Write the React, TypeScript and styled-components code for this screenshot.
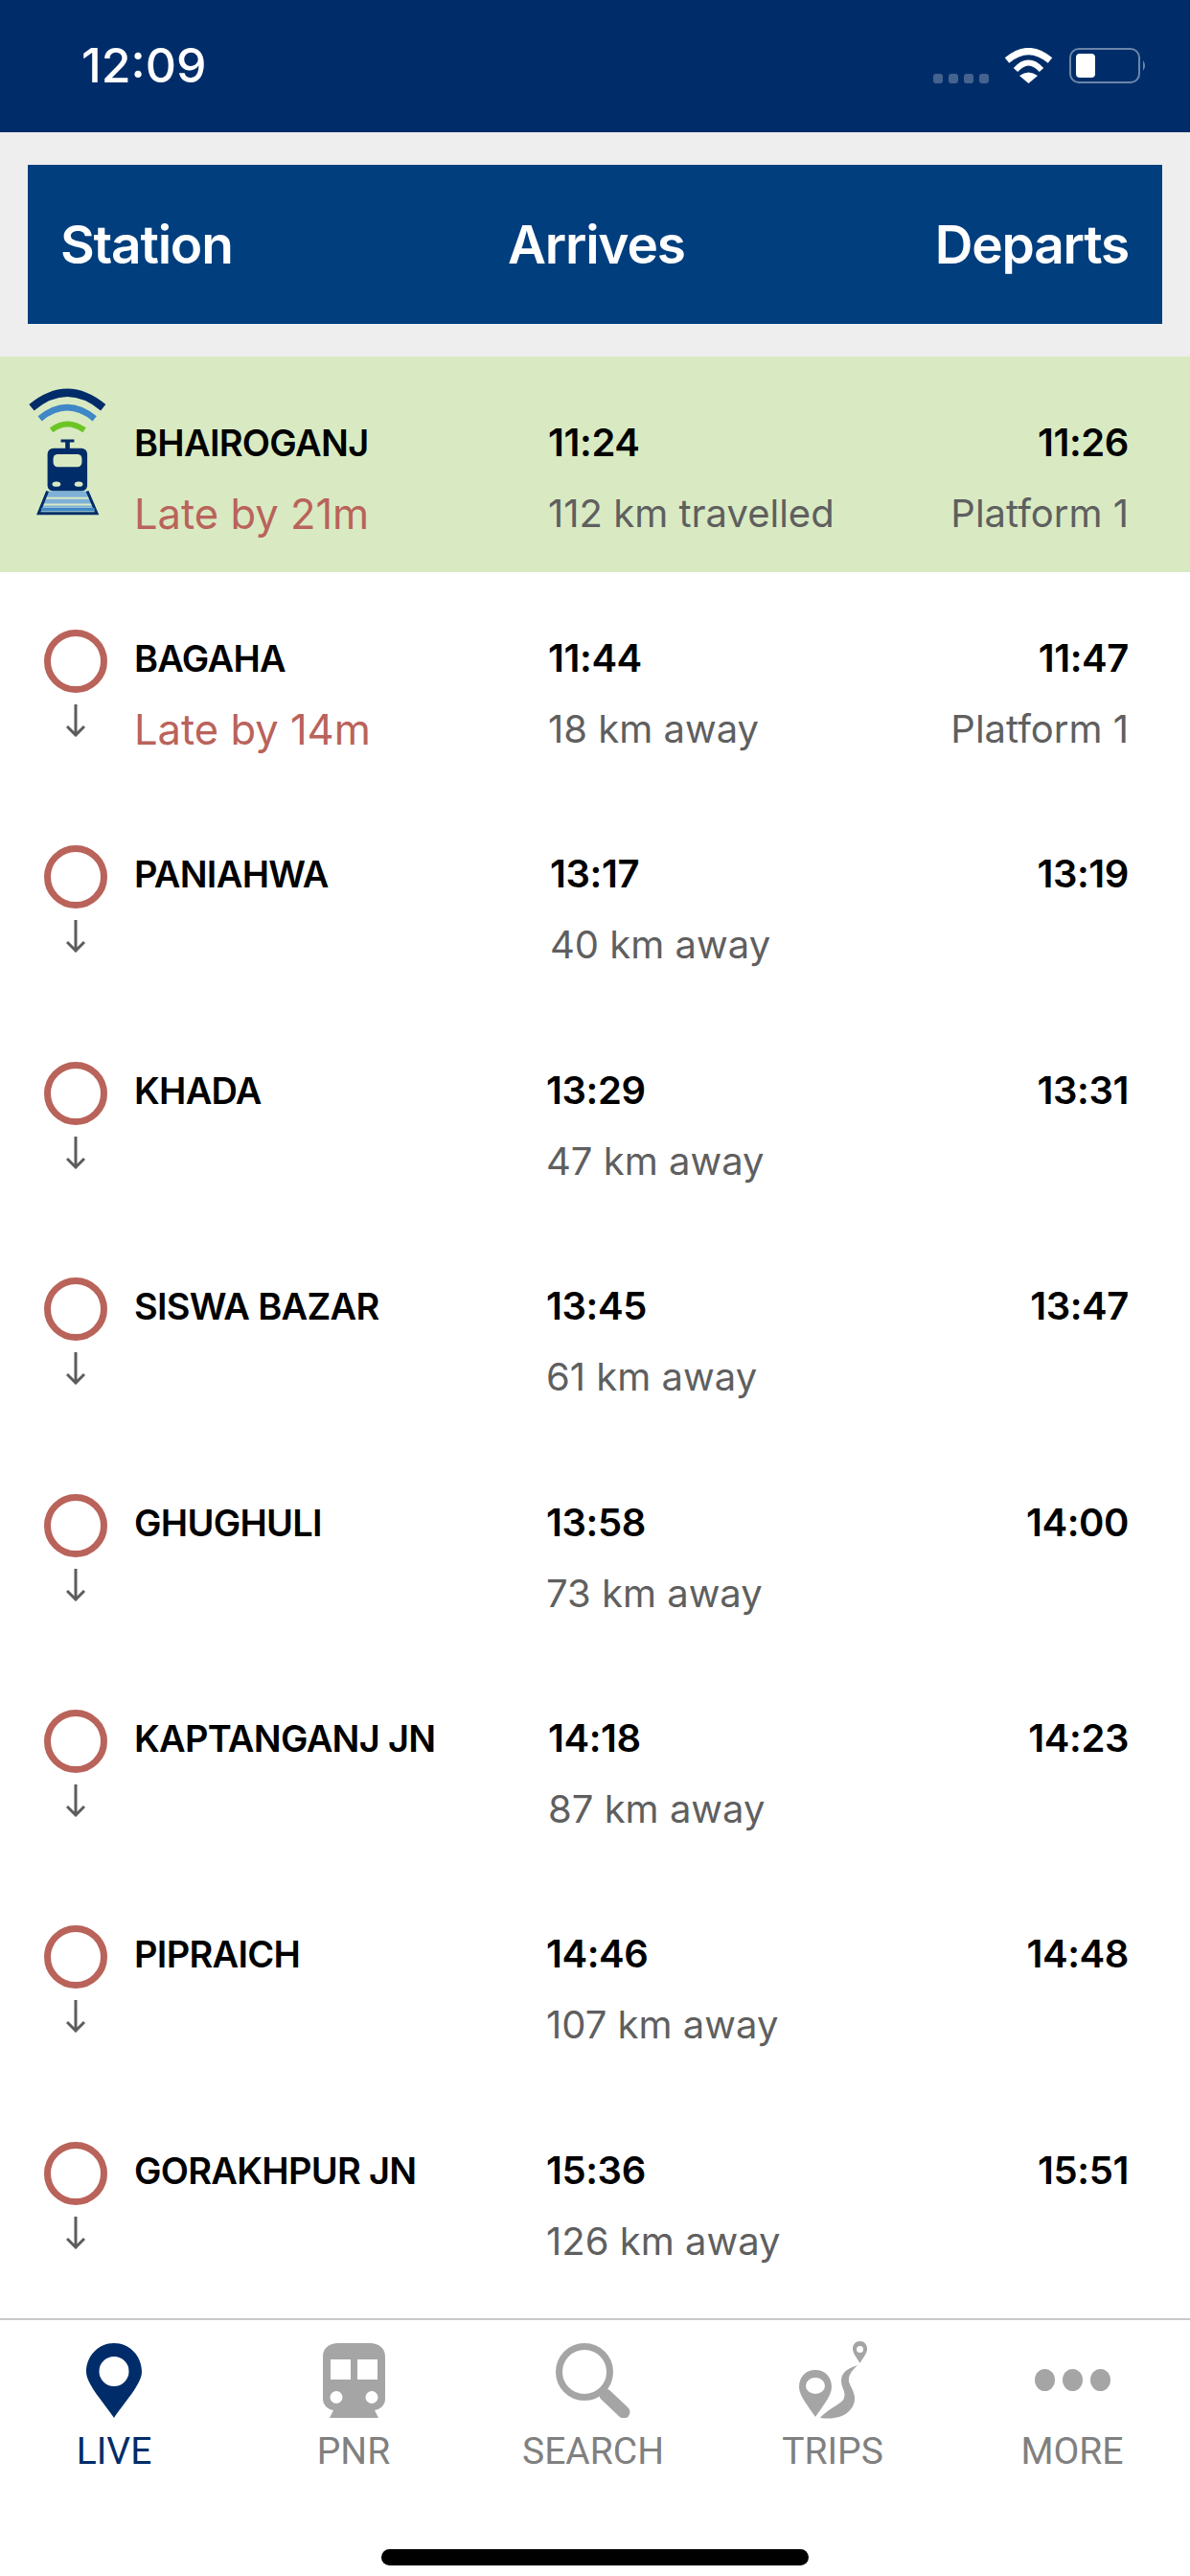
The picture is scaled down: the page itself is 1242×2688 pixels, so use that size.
import React from "react"
import styled, { createGlobalStyle } from "styled-components"

const GlobalStyle = createGlobalStyle`
  html, body {
    margin: 0;
    padding: 0;
    background: #fff;
    font-family: Inter, "Noto Sans", sans-serif;
  }
`

const Screen = styled.div`
  width: 1242px;
  height: 2688px;
  display: flex;
  flex-direction: column;
  overflow: hidden;
  background: #fff;
`

const StatusBar = styled.div`
  height: 138px;
  flex: none;
  box-sizing: border-box;
  background: #002d69;
  display: flex;
  align-items: flex-start;
  padding: 50px 45px 0 85px;
  color: #fff;
`

const Clock = styled.div`
  font-size: 50px;
  line-height: 37px;
  font-weight: 500;
  letter-spacing: 0;
`

const StatusIcons = styled.div`
  margin-left: auto;
  display: flex;
  align-items: flex-start;
`

const SignalDots = styled.div`
  display: flex;
  gap: 6px;
  margin: 27px 16px 0 0;
`

const SignalDot = styled.span`
  width: 10px;
  height: 10px;
  border-radius: 3px;
  background: #44648f;
`

const BatteryIcon = styled.svg`
  margin-left: 17px;
`

const HeaderBand = styled.div`
  height: 234px;
  flex: none;
  box-sizing: border-box;
  background: #eeeeee;
  padding: 34px 29px;
`

const HeaderBar = styled.div`
  height: 166px;
  box-sizing: border-box;
  background: #003e7e;
  color: #fff;
  display: grid;
  grid-template-columns: 467px 1fr auto;
  align-items: center;
  padding: 0 35px 0 34px;
  font-size: 55px;
  font-weight: 600;
  letter-spacing: -1.2px;
`

const List = styled.div`
  flex: 1;
  min-height: 0;
`

const Row = styled.div<{ $current?: boolean }>`
  height: ${(p) => (p.$current ? "225px" : "225.4px")};
  display: grid;
  grid-template-columns: 140px 430px 1fr auto;
  padding-right: 64px;
  background: ${(p) => (p.$current ? "#d9eac3" : "#fff")};
`

const Marker = styled.div<{ $current?: boolean }>`
  display: flex;
  flex-direction: column;
  align-items: flex-start;
  padding: ${(p) => (p.$current ? "33px 0 0 29px" : "60px 0 0 46px")};
`

const Ring = styled.span`
  width: 66px;
  height: 66px;
  box-sizing: border-box;
  border: 7px solid #b9635a;
  border-radius: 50%;
`

const ArrowIcon = styled.svg`
  margin: 12px 0 0 23px;
`

const Cell = styled.div<{ $shift?: number; $end?: boolean }>`
  padding-top: 53px;
  padding-left: ${(p) => p.$shift ?? 0}px;
  text-align: ${(p) => (p.$end ? "right" : "left")};
  white-space: nowrap;
`

const StationName = styled.div`
  height: 74px;
  line-height: 74px;
  font-size: 38px;
  font-weight: 600;
  letter-spacing: -0.7px;
  color: #000;
`

const Time = styled(StationName)`
  font-size: 40px;
  letter-spacing: -0.4px;
`

const Sub = styled.div<{ $late?: boolean }>`
  height: 74px;
  line-height: 74px;
  font-size: ${(p) => (p.$late ? "43.5px" : "40px")};
  font-weight: 400;
  color: ${(p) => (p.$late ? "#b9635a" : "#5f5f5f")};
`

const TabBar = styled.div`
  height: 269px;
  flex: none;
  box-sizing: border-box;
  border-top: 2px solid #c8c8c8;
  display: flex;
  flex-direction: column;
  align-items: center;
  padding-top: 22px;
`

const Tabs = styled.div`
  display: grid;
  grid-template-columns: repeat(5, 250px);
  margin-right: 4px;
`

const Tab = styled.div<{ $active?: boolean }>`
  display: flex;
  flex-direction: column;
  align-items: center;
  color: ${(p) => (p.$active ? "#002d69" : "#808080")};
  font-family: Roboto, Inter, sans-serif;
  font-size: 39px;
  line-height: 38px;
  font-weight: 400;
`

const TabIcon = styled.div`
  height: 81px;
  display: flex;
  align-items: center;
  justify-content: center;
  margin-bottom: 15px;
`

const Dots = styled.div`
  display: flex;
  gap: 8px;
`

const Dot = styled.span`
  width: 21px;
  height: 23px;
  border-radius: 50%;
  background: #a5a5a5;
`

const HomeIndicator = styled.div`
  width: 446px;
  height: 17px;
  margin-top: 83px;
  border-radius: 9px;
  background: #000;
`

const WifiGlyph = () => (
  <svg width="51" height="37" viewBox="0 0 51 37">
    <g fill="none" stroke="#fff">
      <path d="M3 13 Q25.5 -6 48 13" strokeWidth="7" />
      <path d="M12 23 Q25.5 8 39 23" strokeWidth="6" />
    </g>
    <path d="M16 29 Q25.5 22 35 29 L25.5 37Z" fill="#fff" />
  </svg>
)

const BatteryGlyph = () => (
  <BatteryIcon width="81" height="37" viewBox="0 0 81 37">
    <rect x="1" y="1" width="72" height="35" rx="9" fill="none" stroke="#6b86aa" strokeWidth="2" />
    <rect x="7" y="6" width="20" height="25" rx="4" fill="#fff" />
    <path d="M77 13 Q81 18.5 77 24Z" fill="#6b86aa" />
  </BatteryIcon>
)

const LiveTrainGlyph = () => (
  <svg width="83" height="134" viewBox="88 105 250 402">
    <g fill="none">
      <path d="M100 165 Q212 72 325 165" stroke="#002d69" strokeWidth="25" />
      <path d="M126 200 Q212 130 298 200" stroke="#3f87c6" strokeWidth="20" />
      <path d="M162 236 Q212 198 266 236" stroke="#6cc524" strokeWidth="18" />
    </g>
    <path d="M192 265 H234 V274 H220 V295 H206 V274 H192Z" fill="#002d69" />
    <rect x="150" y="293" width="125" height="135" rx="18" fill="#002d69" />
    <rect x="168" y="312" width="90" height="40" rx="14" fill="#d9eac3" />
    <ellipse cx="178" cy="406" rx="13" ry="8" fill="#d9eac3" />
    <ellipse cx="248" cy="406" rx="13" ry="8" fill="#d9eac3" />
    <path d="M150 428 H275 L300 480 H125Z" fill="#7fb0d8" />
    <path d="M140 450 H285 M130 470 H295" stroke="#d9eac3" strokeWidth="6" />
    <path d="M150 428 L122 498 H305 L275 428" fill="none" stroke="#002d69" strokeWidth="9" />
    <path d="M130 486 H298" stroke="#3f87c6" strokeWidth="10" />
  </svg>
)

const DownArrow = () => (
  <ArrowIcon width="20" height="34" viewBox="0 0 20 34">
    <path d="M10 0 V32 M1 23 L10 32 L19 23" fill="none" stroke="#5c5c5c" strokeWidth="3" />
  </ArrowIcon>
)

const PinGlyph = () => (
  <svg width="58" height="78" viewBox="0 0 58 78">
    <path
      fillRule="evenodd"
      fill="#002d69"
      d="M29 0 C13 0 0 13 0 30 C0 43 20 64 29 78 C38 64 58 43 58 30 C58 13 45 0 29 0Z M29 14 A15.5 15.5 0 1 0 29.01 45 A15.5 15.5 0 1 0 29 14Z"
    />
  </svg>
)

const TrainGlyph = () => (
  <svg width="65" height="78" viewBox="0 0 65 78">
    <path
      fillRule="evenodd"
      fill="#a5a5a5"
      d="M16 0 H49 C58 0 65 5 65 14 V58 C65 65 60 69 54 70 L58 78 H7 L11 70 C5 69 0 65 0 58 V14 C0 5 7 0 16 0Z M8 17 V38 H29 V17Z M36 17 V38 H57 V17Z M14 50 A6.5 6.5 0 1 0 14.01 63 A6.5 6.5 0 1 0 14 50Z M51 50 A6.5 6.5 0 1 0 51.01 63 A6.5 6.5 0 1 0 51 50Z"
    />
  </svg>
)

const SearchGlyph = () => (
  <svg width="78" height="78" viewBox="0 0 78 78">
    <circle cx="30" cy="30" r="26.5" fill="none" stroke="#a5a5a5" strokeWidth="7" />
    <path d="M52 54 L71 72" stroke="#a5a5a5" strokeWidth="13" strokeLinecap="round" />
  </svg>
)

const TripsGlyph = () => (
  <svg width="71" height="81" viewBox="0 0 71 81">
    <path
      fillRule="evenodd"
      fill="#a5a5a5"
      d="M17 30 C7 30 0 37 0 48 C0 57 11 70 17 79 C23 70 34 57 34 48 C34 37 27 30 17 30Z M17 38 A10 8.5 0 1 0 17.01 55 A10 8.5 0 1 0 17 38Z"
    />
    <path
      fillRule="evenodd"
      fill="#a5a5a5"
      d="M63.5 0 C59 0 56 3.5 56 8 C56 13 61 18 63.5 23 C66 18 71 13 71 8 C71 3.5 68 0 63.5 0Z M63.5 5 A3.5 3.5 0 1 0 63.51 12 A3.5 3.5 0 1 0 63.5 5Z"
    />
    <path
      fill="#a5a5a5"
      d="M61 25 C52 28 44 32 44 41 C44 49 49 52 47 59 C45 66 33 68 22 80 C36 82 50 79 56 68 C62 56 53 48 52 42 C51 35 56 30 61 25Z"
    />
  </svg>
)

const stops = [
  { name: "BAGAHA", arrives: "11:44", departs: "11:47", away: "18 km away", late: "Late by 14m", platform: "Platform 1", shift: 2 },
  { name: "PANIAHWA", arrives: "13:17", departs: "13:19", away: "40 km away", shift: 4 },
  { name: "KHADA", arrives: "13:29", departs: "13:31", away: "47 km away", shift: 0 },
  { name: "SISWA BAZAR", arrives: "13:45", departs: "13:47", away: "61 km away", shift: 0 },
  { name: "GHUGHULI", arrives: "13:58", departs: "14:00", away: "73 km away", shift: 0 },
  { name: "KAPTANGANJ JN", arrives: "14:18", departs: "14:23", away: "87 km away", shift: 2 },
  { name: "PIPRAICH", arrives: "14:46", departs: "14:48", away: "107 km away", shift: -1 },
  { name: "GORAKHPUR JN", arrives: "15:36", departs: "15:51", away: "126 km away", shift: 0 },
]

const App: React.FC = () => {
  return (
    <Screen>
      <GlobalStyle />
      <StatusBar>
        <Clock>12:09</Clock>
        <StatusIcons>
          <SignalDots>
            <SignalDot />
            <SignalDot />
            <SignalDot />
            <SignalDot />
          </SignalDots>
          <WifiGlyph />
          <BatteryGlyph />
        </StatusIcons>
      </StatusBar>
      <HeaderBand>
        <HeaderBar>
          <span>Station</span>
          <span>Arrives</span>
          <span>Departs</span>
        </HeaderBar>
      </HeaderBand>
      <List>
        <Row $current>
          <Marker $current>
            <LiveTrainGlyph />
          </Marker>
          <Cell>
            <StationName>BHAIROGANJ</StationName>
            <Sub $late>Late by 21m</Sub>
          </Cell>
          <Cell $shift={2}>
            <Time>11:24</Time>
            <Sub>112 km travelled</Sub>
          </Cell>
          <Cell $end>
            <Time>11:26</Time>
            <Sub>Platform 1</Sub>
          </Cell>
        </Row>
        {stops.map((stop) => (
          <Row key={stop.name}>
            <Marker>
              <Ring />
              <DownArrow />
            </Marker>
            <Cell>
              <StationName>{stop.name}</StationName>
              {stop.late && <Sub $late>{stop.late}</Sub>}
            </Cell>
            <Cell $shift={stop.shift}>
              <Time>{stop.arrives}</Time>
              <Sub>{stop.away}</Sub>
            </Cell>
            <Cell $end>
              <Time>{stop.departs}</Time>
              {stop.platform && <Sub>{stop.platform}</Sub>}
            </Cell>
          </Row>
        ))}
      </List>
      <TabBar>
        <Tabs>
          <Tab $active>
            <TabIcon>
              <PinGlyph />
            </TabIcon>
            LIVE
          </Tab>
          <Tab>
            <TabIcon>
              <TrainGlyph />
            </TabIcon>
            PNR
          </Tab>
          <Tab>
            <TabIcon>
              <SearchGlyph />
            </TabIcon>
            SEARCH
          </Tab>
          <Tab>
            <TabIcon>
              <TripsGlyph />
            </TabIcon>
            TRIPS
          </Tab>
          <Tab>
            <TabIcon>
              <Dots>
                <Dot />
                <Dot />
                <Dot />
              </Dots>
            </TabIcon>
            MORE
          </Tab>
        </Tabs>
        <HomeIndicator />
      </TabBar>
    </Screen>
  )
}

export default App
